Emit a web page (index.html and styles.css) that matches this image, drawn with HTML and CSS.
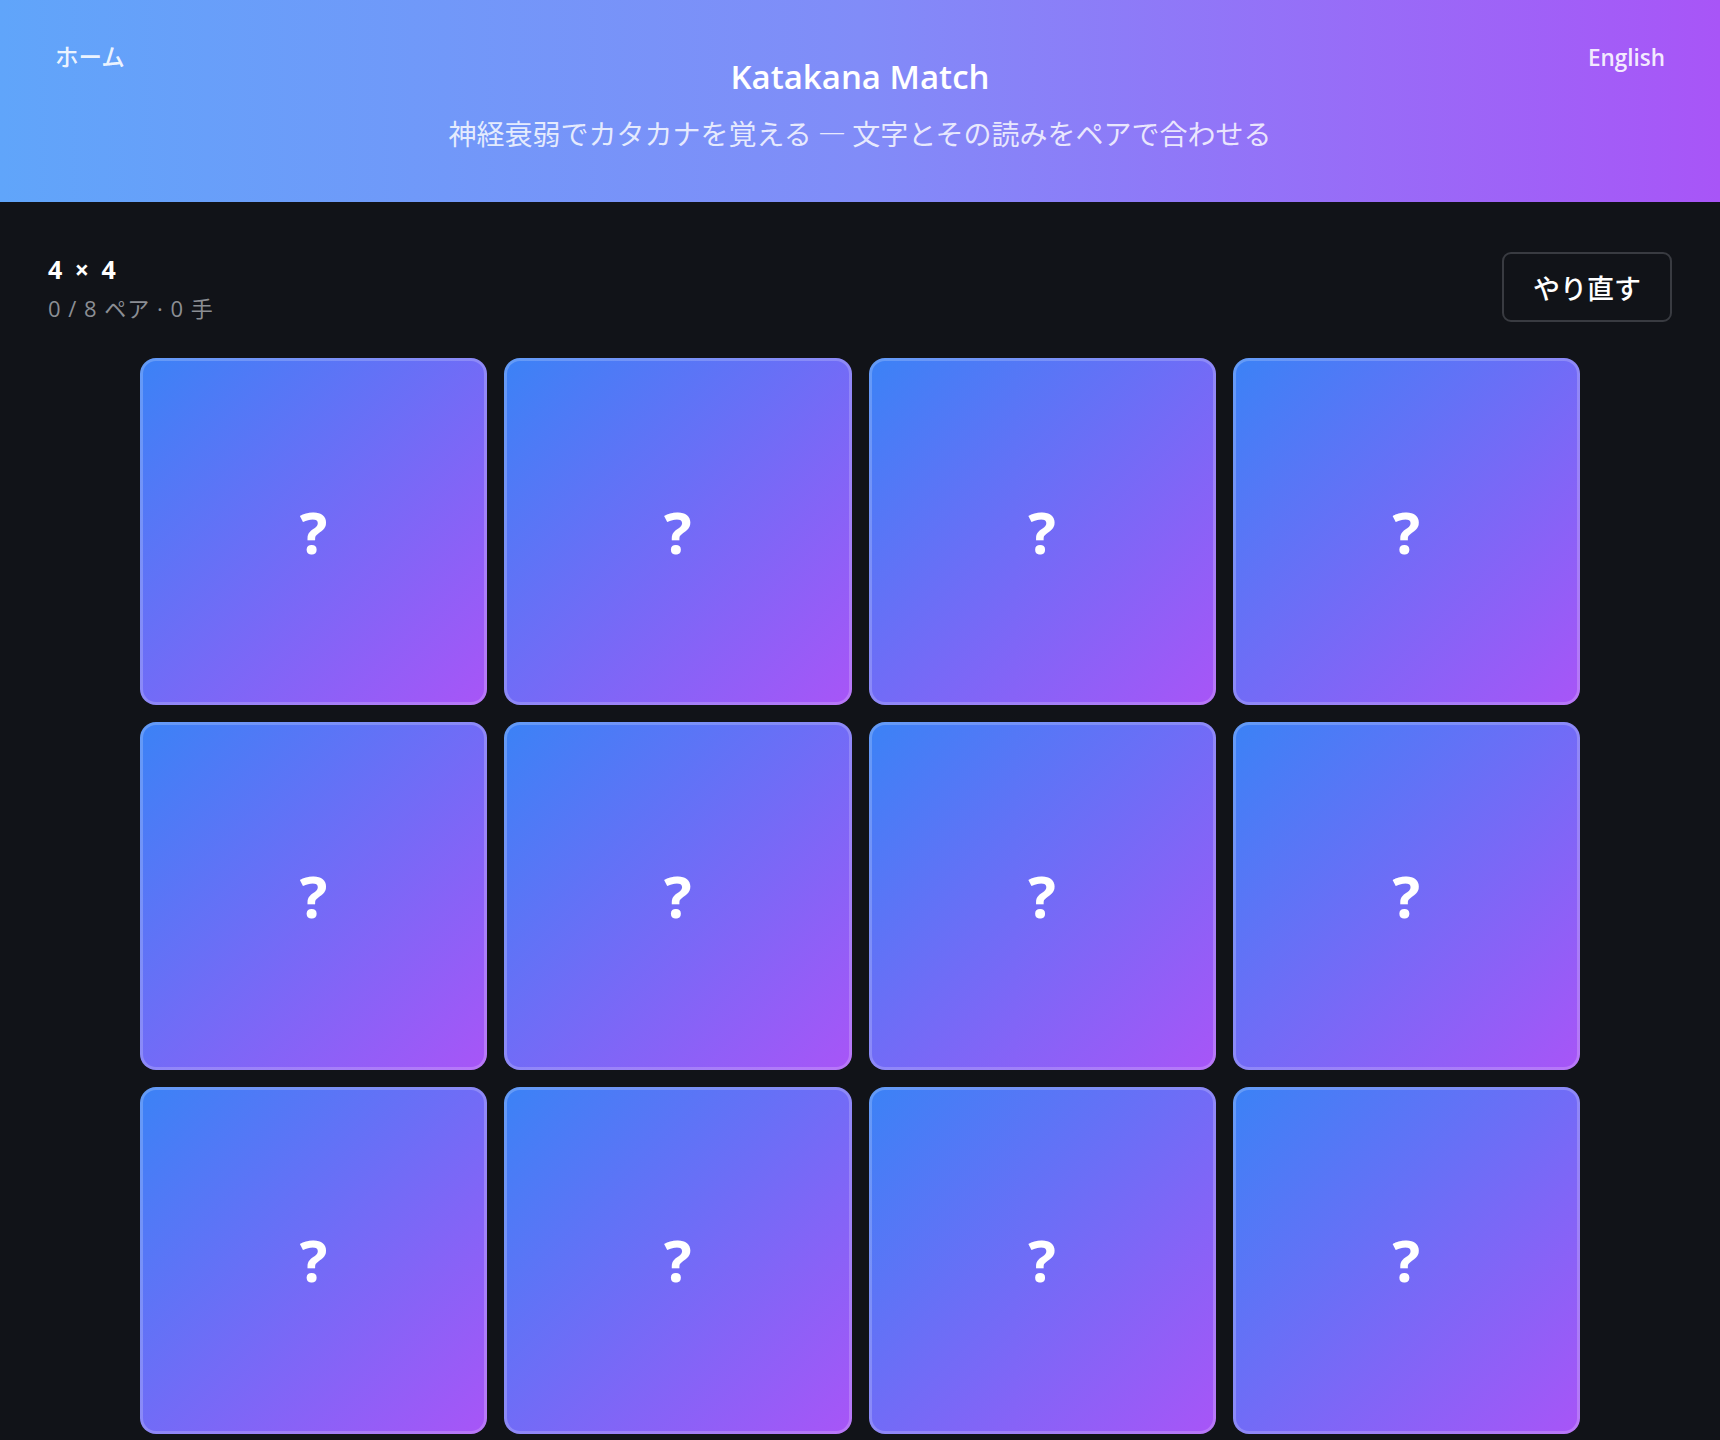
FILE: index.html
```html
<!DOCTYPE html>
<html lang="ja">
<head>
<meta charset="utf-8">
<title>Katakana Match</title>
<link rel="stylesheet" href="styles.css">
</head>
<body>
<header class="hero">
  <a class="nav-link nav-left" href="#">ホーム</a>
  <div class="hero-center">
    <h1 class="title">Katakana Match</h1>
    <p class="subtitle">神経衰弱でカタカナを覚える — 文字とその読みをペアで合わせる</p>
  </div>
  <a class="nav-link nav-right" href="#">English</a>
</header>
<main class="main">
  <div class="toolbar">
    <div class="status">
      <div class="size">4 × 4</div>
      <div class="stats">0 / 8 ペア · 0 手</div>
    </div>
    <button class="reset">やり直す</button>
  </div>
  <div class="board">
    <div class="card"><span class="q">?</span></div>
    <div class="card"><span class="q">?</span></div>
    <div class="card"><span class="q">?</span></div>
    <div class="card"><span class="q">?</span></div>
    <div class="card"><span class="q">?</span></div>
    <div class="card"><span class="q">?</span></div>
    <div class="card"><span class="q">?</span></div>
    <div class="card"><span class="q">?</span></div>
    <div class="card"><span class="q">?</span></div>
    <div class="card"><span class="q">?</span></div>
    <div class="card"><span class="q">?</span></div>
    <div class="card"><span class="q">?</span></div>
    <div class="card"><span class="q">?</span></div>
    <div class="card"><span class="q">?</span></div>
    <div class="card"><span class="q">?</span></div>
    <div class="card"><span class="q">?</span></div>
  </div>
</main>
</body>
</html>
```

FILE: styles.css
```css
* { box-sizing: border-box; }

html, body {
  margin: 0;
  padding: 0;
  background: #111318;
  font-family: "Open Sans", "Noto Sans CJK JP", sans-serif;
  color: #ffffff;
}

.hero {
  height: 202px;
  background: linear-gradient(90deg, #60a5fa 0%, #818cf8 50%, #a855f7 100%);
  display: grid;
  grid-template-columns: 1fr auto 1fr;
  align-items: start;
  padding: 43px 55px 0 55px;
}

.nav-link {
  font-family: "Open Sans", "Noto Sans CJK JP", sans-serif;
  font-size: 22.5px;
  line-height: 26px;
  font-weight: 600;
  color: rgba(255, 255, 255, 0.9);
  text-decoration: none;
}

.nav-left {
  justify-self: start;
  font-family: "Noto Sans CJK JP", sans-serif;
  font-weight: 500;
  font-size: 23.5px;
}
.nav-right {
  justify-self: end;
  margin-top: 2px;
}

.hero-center {
  margin-top: 14px;
  text-align: center;
}

.title {
  margin: 0;
  font-size: 33px;
  line-height: 40px;
  font-weight: 600;
  color: #ffffff;
}

.subtitle {
  margin: 17px 0 0 0;
  font-family: "Noto Sans CJK JP", sans-serif;
  font-size: 28px;
  line-height: 38px;
  font-weight: 400;
  color: rgba(255, 255, 255, 0.82);
  white-space: nowrap;
}

.main {
  padding: 0 48px;
}

.toolbar {
  display: flex;
  justify-content: space-between;
  align-items: flex-start;
  margin-top: 50px;
}

.status {
  margin-top: 2px;
}

.size {
  font-size: 25px;
  line-height: 30px;
  font-weight: 700;
  color: #ffffff;
  word-spacing: 5px;
  letter-spacing: 0.5px;
}

.stats {
  margin-top: 10px;
  font-size: 22px;
  line-height: 28px;
  color: #8b8e94;
  letter-spacing: 1px;
}

.reset {
  width: 170px;
  height: 70px;
  background: transparent;
  border: 2px solid #393b41;
  border-radius: 9px;
  color: #ffffff;
  font-family: "Noto Sans CJK JP", sans-serif;
  font-size: 27px;
  font-weight: 500;
  cursor: pointer;
}

.board {
  max-width: 1440px;
  margin: 36px auto 0 auto;
  display: grid;
  grid-template-columns: repeat(4, 1fr);
  gap: 17px;
}

.card {
  aspect-ratio: 1 / 1;
  border-radius: 16px;
  border: 3px solid rgba(255, 255, 255, 0.2);
  background: linear-gradient(135deg, #3b82f6 0%, #a855f7 100%) border-box;
  display: flex;
  align-items: center;
  justify-content: center;
}

.q {
  font-size: 58px;
  font-weight: 700;
  color: #ffffff;
  line-height: 1;
}
```
